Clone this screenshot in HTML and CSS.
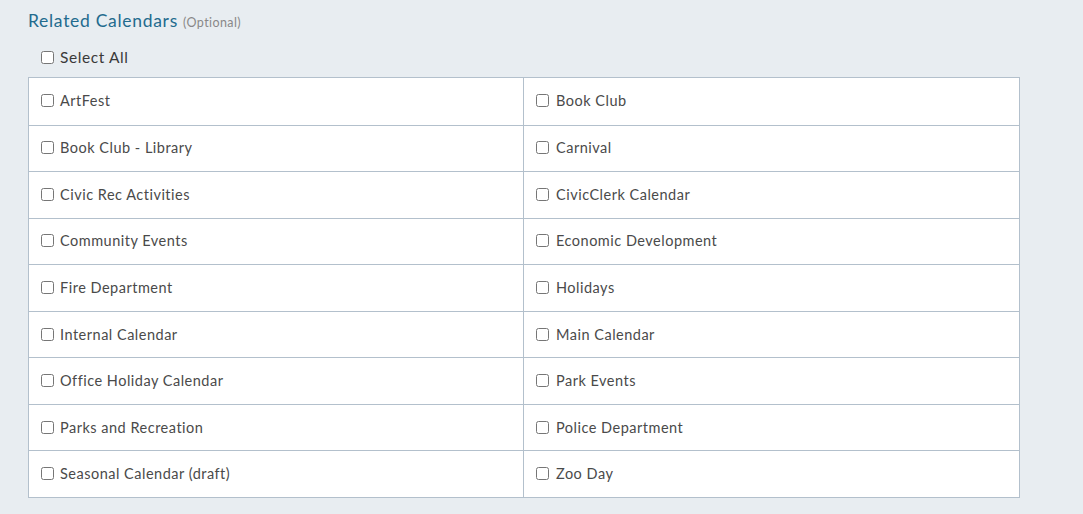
FILE: index.html
```html
<!DOCTYPE html>
<html>
<head>
<meta charset="utf-8">
<link rel="stylesheet" href="styles.css">
</head>
<body>
<div class="page">
  <h2 class="title">Related Calendars <span class="opt">(Optional)</span></h2>
  <label class="select-all"><input type="checkbox"> Select All</label>
  <div class="grid">
    <label class="cell"><input type="checkbox"> ArtFest</label>
    <label class="cell"><input type="checkbox"> Book Club</label>
    <label class="cell"><input type="checkbox"> Book Club - Library</label>
    <label class="cell"><input type="checkbox"> Carnival</label>
    <label class="cell"><input type="checkbox"> Civic Rec Activities</label>
    <label class="cell"><input type="checkbox"> CivicClerk Calendar</label>
    <label class="cell"><input type="checkbox"> Community Events</label>
    <label class="cell"><input type="checkbox"> Economic Development</label>
    <label class="cell"><input type="checkbox"> Fire Department</label>
    <label class="cell"><input type="checkbox"> Holidays</label>
    <label class="cell"><input type="checkbox"> Internal Calendar</label>
    <label class="cell"><input type="checkbox"> Main Calendar</label>
    <label class="cell"><input type="checkbox"> Office Holiday Calendar</label>
    <label class="cell"><input type="checkbox"> Park Events</label>
    <label class="cell"><input type="checkbox"> Parks and Recreation</label>
    <label class="cell"><input type="checkbox"> Police Department</label>
    <label class="cell"><input type="checkbox"> Seasonal Calendar (draft)</label>
    <label class="cell"><input type="checkbox"> Zoo Day</label>
  </div>
</div>
</body>
</html>
```
FILE: styles.css
```css
html, body {
  margin: 0;
  padding: 0;
  background: #e8edf1;
  font-family: Lato, "Open Sans", sans-serif;
  color: #4a4a4a;
}
.page {
  padding: 9px 0 0 28px;
  width: 992px;
}
.title {
  margin: 0;
  font-size: 17.5px;
  font-weight: 400;
  color: #236b8e;
  line-height: 24px;
  letter-spacing: 0.7px;
}
.opt {
  font-size: 12.5px;
  color: #888;
  letter-spacing: 0.4px;
}
.select-all {
  display: flex;
  align-items: center;
  height: 24px;
  margin: 10px 0 8px 13px;
  font-size: 15.5px;
  letter-spacing: 0.6px;
  color: #3a3a3a;
}
input[type=checkbox] {
  width: 13px;
  height: 13px;
  margin: 0 6px 0 0;
}
.grid {
  display: grid;
  grid-template-columns: 1fr 1fr;
  grid-auto-rows: 46.56px;
  background: #fff;
  border: 1px solid #b3c0cc;
  box-sizing: border-box;
  width: 992px;
}
.cell {
  display: flex;
  align-items: center;
  padding-left: 12px;
  padding-bottom: 1px;
  font-size: 14.5px;
  letter-spacing: 0.5px;
  border-top: 1px solid #b3c0cc;
}
.cell:nth-child(-n+2) {
  border-top: none;
}
.cell:nth-child(odd) {
  border-right: 1px solid #b3c0cc;
}
.cell:nth-child(even) input[type=checkbox] {
  margin-right: 7px;
}
```
